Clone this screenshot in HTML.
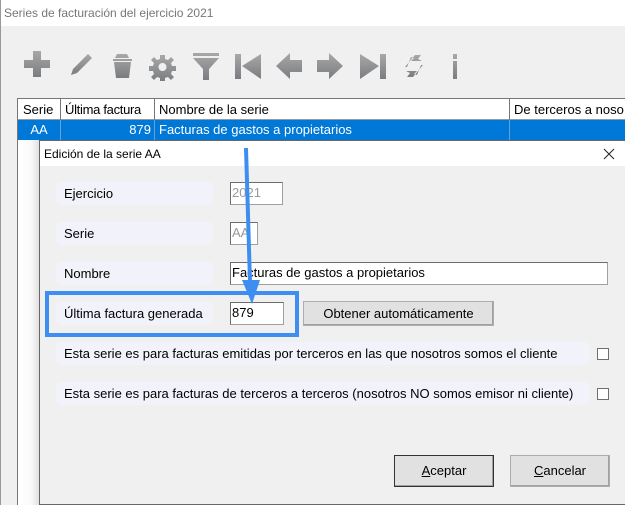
<!DOCTYPE html>
<html><head><meta charset="utf-8"><style>
*{margin:0;padding:0;box-sizing:border-box}
body{width:625px;height:505px;overflow:hidden;background:#f0f0f0;font-family:"Liberation Sans",sans-serif;font-size:13px;color:#000;position:relative}
.a{position:absolute}
.pill{position:absolute;background:#f2f2fa;border-radius:5px;padding-left:8px;line-height:23px;height:23px;font-size:13px}
.inp{position:absolute;background:#fff;border:1px solid #a0a0a0;border-top-color:#6d6d6d;border-left-color:#6d6d6d;height:23px;line-height:20px;padding-left:1px;font-size:13px}
.btn{position:absolute;background:#e1e1e1;border:1px solid #adadad;box-shadow:inset -1px -1px 0 #a0a0a0;text-align:center;font-size:13px}
.cb{position:absolute;width:12px;height:12px;background:#fff;border:1px solid #707070}
</style></head><body>
<div class="a" style="left:0;top:0;width:625px;height:26px;background:#fff;border-left:1px solid #999"></div>
<div class="a" style="left:4px;top:6px;font-size:12px;color:#777">Series de facturación del ejercicio 2021</div>
<div class="a" style="left:0;top:26px;width:1px;height:479px;background:#999"></div>
<svg class="a" style="left:20px;top:45px" width="450" height="36" viewBox="0 0 450 36">
<defs><linearGradient id="g" x1="0" y1="0" x2="0" y2="1"><stop offset="0" stop-color="#a8a8a8"/><stop offset="1" stop-color="#7a7c80"/></linearGradient></defs>
<g fill="url(#g)">
<path d="M13 6h8v9h9v8h-9v9h-8v-9h-9v-8h9z"/>
<path d="M51 30l2-6 15-15 4 4-15 15z"/>
<path d="M93 14h19v2h-19z M94 17h17l-2 16h-13z M97 9h10l2 4h-14z"/>
<path d="M140 10h5v4l3 1 3-3 3 3-3 3 1 3h4v5h-4l-1 3 3 3-3 3-3-3-3 1v4h-5v-4l-3-1-3 3-3-3 3-3-1-3h-4v-5h4l1-3-3-3 3-3 3 3 3-1z M142.5 18a4 4 0 1 0 0.01 0z" fill-rule="evenodd"/>
<path d="M173 8h26v3h-26z M173 13h26l-10 11v11h-6v-11z"/>
<path d="M215 9h6v25h-6z M222 21l19-12v25z"/>
<path d="M256 21l14-13v7h12v12h-12v7z"/>
<path d="M297 15h12v-7l14 13-14 13v-7h-12z"/>
<path d="M340 9l19 12-19 13z M360 9h6v25h-6z"/>
<path d="M385 22l10-12h6l-3 4 4 2-11 0 3-3-3-1-4 10z M403 20l-10 12h-6l3-4-4-2h11l-3 3 3 1 4-10z"/>
<path d="M433 9h4v5h-4z M433 16h4v18h-4z"/>
</g></svg>
<!-- table -->
<div class="a" style="left:17px;top:98px;width:608px;height:407px;background:#fff;border-left:1px solid #777;border-top:1px solid #777"></div>
<div class="a" style="left:18px;top:99px;width:607px;height:21px;background:#fff;border-bottom:1px solid #999"></div>
<div class="a" style="left:18px;top:99px;height:21px;line-height:21px;font-size:13px">
<span class="a" style="left:0;width:43px;padding-left:5px;border-right:1px solid #777;height:21px">Serie</span>
<span class="a" style="left:43px;width:94px;padding-left:4px;border-right:1px solid #777;height:21px;letter-spacing:-0.3px">Última factura</span>
<span class="a" style="left:137px;width:355px;padding-left:4px;border-right:1px solid #777;height:21px">Nombre de la serie</span>
<span class="a" style="left:492px;width:140px;padding-left:4px;height:21px;white-space:nowrap">De terceros a noso</span>
</div>
<div class="a" style="left:18px;top:120px;width:607px;height:20px;background:#0078d7;color:#fff;line-height:20px">
<span class="a" style="left:0;width:43px;text-align:center;border-right:1px solid #6aa0d8;height:20px">AA</span>
<span class="a" style="left:43px;width:94px;text-align:right;padding-right:3px;border-right:1px solid #6aa0d8;height:20px">879</span>
<span class="a" style="left:137px;width:355px;padding-left:4px;border-right:1px solid #6aa0d8;height:20px">Facturas de gastos a propietarios</span>
</div>
<div class="a" style="left:19px;top:140px;width:20px;height:365px;background:linear-gradient(90deg,#fff,#fafafa 60%,#e0e0e0)"></div>
<!-- dialog -->
<div class="a" style="left:39px;top:140px;width:586px;height:365px;background:#f0f0f0;border:1px solid #666;border-right:none"></div>
<div class="a" style="left:40px;top:141px;width:585px;height:25px;background:#fff"></div>
<div class="a" style="left:44px;top:147px;font-size:12px">Edición de la serie AA</div>
<svg class="a" style="left:603px;top:148px" width="12" height="12"><path d="M1 1L11 11M11 1L1 11" stroke="#222" stroke-width="1"/></svg>
<div class="pill" style="left:56px;top:182px;width:157px">Ejercicio</div>
<div class="inp" style="left:230px;top:182px;width:53px;color:#999">2021</div>
<div class="pill" style="left:56px;top:222px;width:157px">Serie</div>
<div class="inp" style="left:230px;top:222px;width:28px;color:#999">AA</div>
<div class="pill" style="left:56px;top:262px;width:157px">Nombre</div>
<div class="inp" style="left:230px;top:262px;width:378px">Facturas de gastos a propietarios</div>
<div class="pill" style="left:56px;top:302px;width:157px">Última factura generada</div>
<div class="inp" style="left:230px;top:302px;width:54px">879</div>
<div class="btn" style="left:303px;top:301px;width:191px;height:25px;line-height:23px">Obtener automáticamente</div>
<div class="pill" style="left:56px;top:342px;width:534px">Esta serie es para facturas emitidas por terceros en las que nosotros somos el cliente</div>
<div class="cb" style="left:597px;top:348px"></div>
<div class="pill" style="left:56px;top:382px;width:534px">Esta serie es para facturas de terceros a terceros (nosotros NO somos emisor ni cliente)</div>
<div class="cb" style="left:597px;top:388px"></div>
<div class="btn" style="left:394px;top:455px;width:100px;height:32px;line-height:30px;border-color:#333"><u>A</u>ceptar</div>
<div class="btn" style="left:510px;top:455px;width:100px;height:32px;line-height:30px"><u>C</u>ancelar</div>
<!-- highlight -->
<div class="a" style="left:45px;top:291px;width:254px;height:46px;border:4px solid #3d8ef0"></div>
<svg class="a" style="left:235px;top:146px" width="35" height="162"><path d="M11 2L15 136" stroke="#3d8ef0" stroke-width="4" fill="none"/><path d="M7 134h18l-8 24z" fill="#3d8ef0"/></svg>
</body></html>
